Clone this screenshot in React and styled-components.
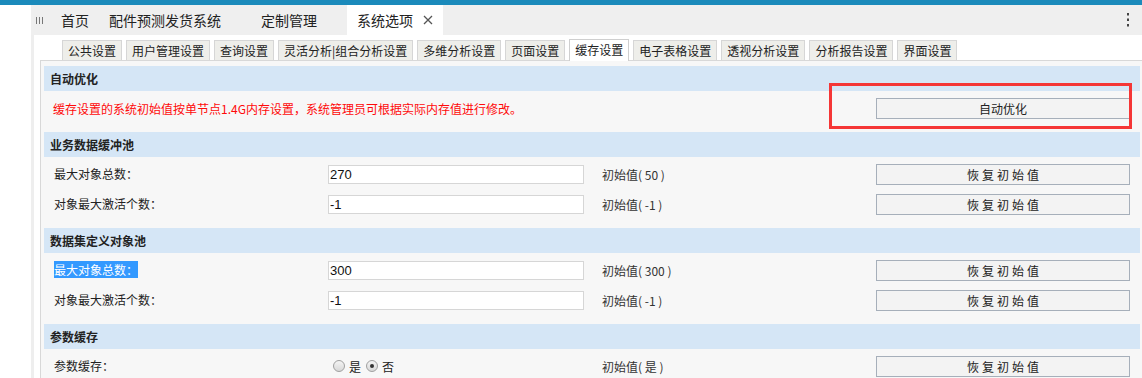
import styled, { createGlobalStyle } from "styled-components";

const GlobalStyle = createGlobalStyle`
  html, body {
    margin: 0;
    padding: 0;
    background: #ffffff;
    overflow: hidden;
  }
  body {
    font-family: "Noto Sans CJK SC", "Liberation Sans", sans-serif;
    color: #222;
  }
`;

const Page = styled.div`
  position: relative;
  width: 1142px;
  height: 378px;
  overflow: hidden;
`;

const TopStripe = styled.div`
  height: 5px;
  background: #1b8abb;
`;

const Shell = styled.div`
  display: flex;
`;

const Gutter = styled.div`
  width: 31px;
  flex: none;
`;

const Main = styled.div`
  flex: 1;
  min-width: 0;
`;

const TopTabs = styled.nav`
  display: flex;
  align-items: center;
  height: 30px;
  background: #efefef;
`;

const Handle = styled.svg`
  margin: 0 7px 0 5px;
  flex: none;
`;

const TopTab = styled.div`
  display: flex;
  align-items: center;
  height: 100%;
  padding: 0 10px;
  margin-left: ${(p) => p.$ml || 0}px;
  font-size: 14px;
  line-height: 30px;
  color: #222;
  background: ${(p) => (p.$active ? "#ffffff" : "transparent")};
  svg {
    margin-left: 10px;
  }
`;

const More = styled.svg`
  margin-left: auto;
  margin-right: 12px;
`;

const Workspace = styled.div`
  border-left: 3px solid #eeeeee;
  padding-left: 6px;
  background: #ffffff;
`;

const SubTabs = styled.div`
  display: flex;
  align-items: flex-end;
  gap: 4px;
  height: 25px;
  padding-left: 22px;
`;

const SubTab = styled.div`
  position: relative;
  box-sizing: border-box;
  height: ${(p) => (p.$active ? 22 : 20)}px;
  margin-bottom: ${(p) => (p.$active ? -1 : 0)}px;
  padding: 0 5px;
  border: 1px solid ${(p) => (p.$active ? "#cfcfcf" : "#d6d6d6")};
  border-bottom: none;
  background: ${(p) => (p.$active ? "#ffffff" : "#eeeeea")};
  font-size: 12px;
  line-height: 19px;
  white-space: nowrap;
  color: #222;
  z-index: 1;
`;

const Panel = styled.div`
  border-top: 1px solid #d8d8d8;
  border-left: 1px solid #d8d8d8;
  background: #f7f7f7;
  padding: 5px 2px 0 3px;
`;

const SectionHead = styled.div`
  height: 25px;
  padding-left: 6px;
  background: #d5e6f6;
  font-size: 12px;
  font-weight: bold;
  line-height: 25px;
  color: #222;
`;

const SectionBody = styled.div`
  padding: 2px 0 9px;
`;

const Row = styled.div`
  display: grid;
  grid-template-columns: 274px 274px 274px 254px;
  align-items: center;
  height: 30px;
  padding-left: 10px;
`;

const Notice = styled.div`
  grid-column: 1 / 4;
  margin-left: -1px;
  font-size: 12px;
  color: #ff0a0a;
  white-space: nowrap;
`;

const Label = styled.div`
  font-size: 12px;
  line-height: 16px;
  color: #222;
  span {
    background: ${(p) => (p.$selected ? "#3399ff" : "transparent")};
    color: ${(p) => (p.$selected ? "#ffffff" : "inherit")};
  }
`;

const Field = styled.input`
  box-sizing: border-box;
  width: 256px;
  height: 19px;
  padding: 0 1px;
  border: 1px solid #d6d6d6;
  background: #ffffff;
  font-family: "Liberation Sans", "Noto Sans CJK SC", sans-serif;
  font-size: 13px;
  color: #111;
  outline: none;
`;

const Hint = styled.div`
  font-size: 12px;
  color: #333;
  white-space: pre;
`;

const ActionButton = styled.button`
  box-sizing: border-box;
  width: 254px;
  height: 21px;
  padding: 0;
  border: 1px solid #a6afba;
  background: #f3f3f3;
  font-family: "Noto Sans CJK SC", sans-serif;
  font-size: 12px;
  line-height: 19px;
  letter-spacing: ${(p) => p.$spacing || 0}px;
  text-indent: ${(p) => p.$spacing || 0}px;
  color: #222;
`;

const RadioGroup = styled.div`
  display: flex;
  align-items: center;
  padding-left: 5px;
  font-size: 12px;
  color: #222;
`;

const RadioDot = styled.span`
  position: relative;
  box-sizing: border-box;
  width: 12px;
  height: 12px;
  margin-right: 4px;
  border: 1px solid #a0a0a0;
  border-radius: 50%;
  background: linear-gradient(#f4f4f4, #d8d8d8);
  &::after {
    content: "";
    display: ${(p) => (p.$checked ? "block" : "none")};
    position: absolute;
    left: 3px;
    top: 3px;
    width: 4px;
    height: 4px;
    border-radius: 50%;
    background: #333;
  }
`;

const RadioText = styled.span`
  margin-right: 5px;
`;

const Annotation = styled.div`
  position: absolute;
  left: 829px;
  top: 83px;
  width: 303px;
  height: 46px;
  box-sizing: border-box;
  border: 3px solid #f53636;
  pointer-events: none;
`;

const subTabs = [
  "公共设置",
  "用户管理设置",
  "查询设置",
  "灵活分析|组合分析设置",
  "多维分析设置",
  "页面设置",
  "缓存设置",
  "电子表格设置",
  "透视分析设置",
  "分析报告设置",
  "界面设置",
];

const sections = [
  {
    title: "业务数据缓冲池",
    rows: [
      { label: "最大对象总数：", value: "270", init: "初始值( 50 )" },
      { label: "对象最大激活个数：", value: "-1", init: "初始值( -1 )" },
    ],
  },
  {
    title: "数据集定义对象池",
    rows: [
      { label: "最大对象总数：", value: "300", init: "初始值( 300 )", selected: true },
      { label: "对象最大激活个数：", value: "-1", init: "初始值( -1 )" },
    ],
  },
];

function App() {
  return (
    <Page>
      <GlobalStyle />
      <TopStripe />
      <Shell>
        <Gutter />
        <Main>
          <TopTabs>
            <Handle width="8" height="7" viewBox="0 0 8 7">
              <path d="M0.5 0v7M3.5 0v7M6.5 0v7" stroke="#777" strokeWidth="1" />
            </Handle>
            <TopTab>首页</TopTab>
            <TopTab>配件预测发货系统</TopTab>
            <TopTab $ml={20}>定制管理</TopTab>
            <TopTab $ml={20} $active>
              系统选项
              <svg width="10" height="10" viewBox="0 0 10 10">
                <path d="M1 1l8 8M9 1l-8 8" stroke="#555" strokeWidth="1.3" />
              </svg>
            </TopTab>
            <More width="4" height="14" viewBox="0 0 4 14">
              <rect x="1" y="0" width="2" height="2.5" fill="#444" />
              <rect x="1" y="5.5" width="2" height="2.5" fill="#444" />
              <rect x="1" y="11" width="2" height="2.5" fill="#444" />
            </More>
          </TopTabs>
          <Workspace>
            <SubTabs>
              {subTabs.map((t) => (
                <SubTab key={t} $active={t === "缓存设置"}>
                  {t}
                </SubTab>
              ))}
            </SubTabs>
            <Panel>
              <SectionHead>自动优化</SectionHead>
              <SectionBody>
                <Row>
                  <Notice>
                    缓存设置的系统初始值按单节点1.4G内存设置，系统管理员可根据实际内存值进行修改。
                  </Notice>
                  <ActionButton>自动优化</ActionButton>
                </Row>
              </SectionBody>
              {sections.map((s) => (
                <div key={s.title}>
                  <SectionHead>{s.title}</SectionHead>
                  <SectionBody>
                    {s.rows.map((r) => (
                      <Row key={r.label}>
                        <Label $selected={r.selected}>
                          <span>{r.label}</span>
                        </Label>
                        <Field defaultValue={r.value} />
                        <Hint>{r.init}</Hint>
                        <ActionButton $spacing={3}>恢复初始值</ActionButton>
                      </Row>
                    ))}
                  </SectionBody>
                </div>
              ))}
              <SectionHead>参数缓存</SectionHead>
              <SectionBody>
                <Row>
                  <Label>
                    <span>参数缓存：</span>
                  </Label>
                  <RadioGroup>
                    <RadioDot />
                    <RadioText>是</RadioText>
                    <RadioDot $checked />
                    <RadioText>否</RadioText>
                  </RadioGroup>
                  <Hint>初始值( 是 )</Hint>
                  <ActionButton $spacing={3}>恢复初始值</ActionButton>
                </Row>
              </SectionBody>
            </Panel>
          </Workspace>
        </Main>
      </Shell>
      <Annotation />
    </Page>
  );
}

export default App;
